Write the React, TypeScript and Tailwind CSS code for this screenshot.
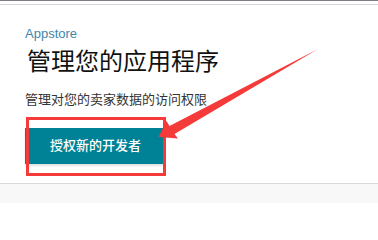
const cjk = { fontFamily: '"Liberation Sans", "Noto Sans CJK SC", sans-serif' };

const Arrow = () => (
  <svg
    className="pointer-events-none absolute left-0 top-0"
    width="378"
    height="204"
    viewBox="0 0 378 204"
  >
    <polygon
      points="318,49 169.5,126 166.5,121 158.5,137 178,138.5 174.5,134"
      fill="#f53a3a"
    />
  </svg>
);

export default function App() {
  return (
    <div className="relative h-[204px] w-[378px] overflow-hidden bg-white" style={cjk}>
      <div className="h-px bg-[#7b7f85]" />
      <div className="mt-[3px] h-px bg-[#d6d6d6]" />

      <section className="flex flex-col items-start pl-[25px] pt-[21px] pb-[19px]">
        <p className="text-[13px] leading-4 text-[#3f86ac]">Appstore</p>
        <h1 className="ml-[2px] mt-[6px] text-[24px] leading-7 text-[#111]">管理您的应用程序</h1>
        <p className="mt-[15px] text-[13px] leading-[18px] text-[#333]">管理对您的卖家数据的访问权限</p>
        <button className="mt-[19px] flex h-9 w-[139px] items-center justify-center border-l-2 border-[#5b5f63] bg-[#008296] text-[13px] font-medium text-white shadow-[0_2px_2px_rgba(0,0,0,0.12)]">
          授权新的开发者
        </button>
      </section>

      <div className="h-[20px] border-t border-[#dadada] bg-[#f8f8f8]" />

      <div className="pointer-events-none absolute left-[26px] top-[117px] h-[59px] w-[140px] border-[3px] border-[#f53a3a]" />
      <Arrow />
    </div>
  );
}
